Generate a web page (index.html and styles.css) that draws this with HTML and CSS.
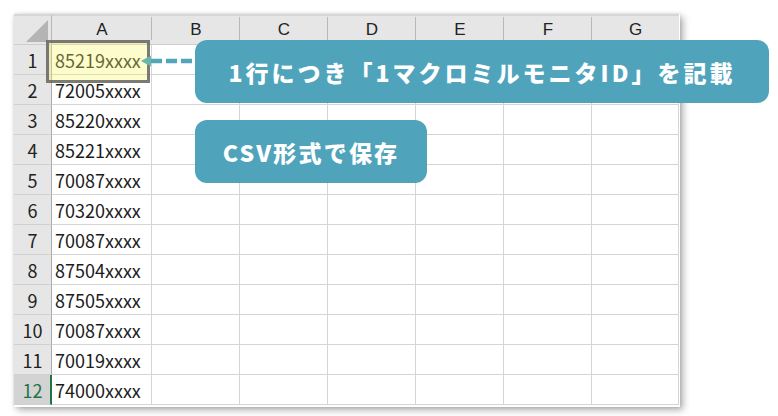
FILE: index.html
```html
<!DOCTYPE html>
<html lang="ja">
<head>
<meta charset="utf-8">
<link rel="stylesheet" href="styles.css">
</head>
<body>
<div class="page">
  <div class="sheet">
    <div class="grid">
      <div class="corner"><span class="tri"></span></div>
      <div class="ch">A</div><div class="ch">B</div><div class="ch">C</div><div class="ch">D</div><div class="ch">E</div><div class="ch">F</div><div class="ch last">G</div>

      <div class="rh">1</div><div class="cell">85219xxxx</div><div class="cell"></div><div class="cell"></div><div class="cell"></div><div class="cell"></div><div class="cell"></div><div class="cell"></div>
      <div class="rh">2</div><div class="cell">72005xxxx</div><div class="cell"></div><div class="cell"></div><div class="cell"></div><div class="cell"></div><div class="cell"></div><div class="cell"></div>
      <div class="rh">3</div><div class="cell">85220xxxx</div><div class="cell"></div><div class="cell"></div><div class="cell"></div><div class="cell"></div><div class="cell"></div><div class="cell"></div>
      <div class="rh">4</div><div class="cell">85221xxxx</div><div class="cell"></div><div class="cell"></div><div class="cell"></div><div class="cell"></div><div class="cell"></div><div class="cell"></div>
      <div class="rh">5</div><div class="cell">70087xxxx</div><div class="cell"></div><div class="cell"></div><div class="cell"></div><div class="cell"></div><div class="cell"></div><div class="cell"></div>
      <div class="rh">6</div><div class="cell">70320xxxx</div><div class="cell"></div><div class="cell"></div><div class="cell"></div><div class="cell"></div><div class="cell"></div><div class="cell"></div>
      <div class="rh">7</div><div class="cell">70087xxxx</div><div class="cell"></div><div class="cell"></div><div class="cell"></div><div class="cell"></div><div class="cell"></div><div class="cell"></div>
      <div class="rh">8</div><div class="cell">87504xxxx</div><div class="cell"></div><div class="cell"></div><div class="cell"></div><div class="cell"></div><div class="cell"></div><div class="cell"></div>
      <div class="rh">9</div><div class="cell">87505xxxx</div><div class="cell"></div><div class="cell"></div><div class="cell"></div><div class="cell"></div><div class="cell"></div><div class="cell"></div>
      <div class="rh">10</div><div class="cell">70087xxxx</div><div class="cell"></div><div class="cell"></div><div class="cell"></div><div class="cell"></div><div class="cell"></div><div class="cell"></div>
      <div class="rh">11</div><div class="cell">70019xxxx</div><div class="cell"></div><div class="cell"></div><div class="cell"></div><div class="cell"></div><div class="cell"></div><div class="cell"></div>
      <div class="rh active">12</div><div class="cell">74000xxxx</div><div class="cell"></div><div class="cell"></div><div class="cell"></div><div class="cell"></div><div class="cell"></div><div class="cell"></div>
    </div>
  </div>

  <div class="sel"></div>
  <svg class="arrow" width="56" height="14" viewBox="0 0 56 14">
    <line x1="10" y1="7" x2="56" y2="7" stroke="#52a6ba" stroke-width="4.5" stroke-dasharray="11 4"/>
    <polygon points="0,7 10,1.5 10,12.5" fill="#6ab4a8"/>
  </svg>
  <div class="callout c1">1行につき「1マクロミルモニタID」を記載</div>
  <div class="callout c2">CSV形式で保存</div>
</div>
</body>
</html>
```
FILE: styles.css
```css
* { box-sizing: border-box; }
html, body { margin: 0; padding: 0; background: #ffffff; }
.page {
  position: relative;
  width: 778px;
  height: 416px;
  padding: 14px;
  font-family: "Noto Sans CJK JP", "Noto Sans", sans-serif;
}
.sheet {
  width: 666px;
  background: #ffffff;
  padding: 0 1px 2px 0;
  box-shadow: 3px 3px 7px rgba(0,0,0,0.32), 0 0 3px rgba(0,0,0,0.12);
}
.grid {
  display: grid;
  grid-template-columns: 38px 100px repeat(5, 88px) 87px;
  grid-template-rows: 31px;
  grid-auto-rows: 30px;
}
.corner {
  position: relative;
  background: #e6e6e6;
  border-right: 1px solid #b9b9b9;
  border-bottom: 1px solid #cdcdcd;
  border-top: 2px solid #d6d6d6;
}
.tri {
  position: absolute;
  right: 3px;
  bottom: 2px;
  width: 0;
  height: 0;
  border-style: solid;
  border-width: 0 0 22px 22px;
  border-color: transparent transparent #b4b4b4 transparent;
}
.ch {
  position: relative;
  background: #e6e6e6;
  border-top: 2px solid #d6d6d6;
  border-bottom: 1px solid #cdcdcd;
  display: flex;
  align-items: center;
  justify-content: center;
  font-size: 17px;
  color: #222222;
  font-family: "Liberation Sans", sans-serif;
  padding-bottom: 1px;
}
.ch::after {
  content: "";
  position: absolute;
  right: 0;
  top: 1px;
  bottom: 4px;
  width: 1px;
  background: #b8b8b8;
}
.ch.last::after { display: none; }
.rh {
  background: #e6e6e6;
  border-right: 1px solid #ababab;
  border-bottom: 1px solid #d0d0d0;
  display: flex;
  align-items: center;
  justify-content: center;
  font-size: 18px;
  color: #222222;
  padding-top: 1px;
}
.rh.active {
  background: #d3d3d3;
  color: #217346;
  border-right: 2px solid #217346;
  padding-left: 1px;
}
.cell {
  border-right: 1px solid #d4d4d4;
  border-bottom: 1px solid #d4d4d4;
  display: flex;
  align-items: center;
  padding: 1px 0 0 3px;
  font-size: 18px;
  color: #1c1c1c;
  white-space: nowrap;
}
.sel {
  position: absolute;
  left: 46px;
  top: 40px;
  width: 104px;
  height: 43px;
  border: 3px solid rgba(100,100,100,0.85);
  background: rgba(250,245,100,0.33);
}
.arrow {
  position: absolute;
  left: 141px;
  top: 54px;
}
.callout {
  position: absolute;
  left: 195px;
  height: 63px;
  background: #4fa4bc;
  border-radius: 12px;
  color: #ffffff;
  font-weight: 800;
  font-size: 23px;
  letter-spacing: 3px;
  display: flex;
  align-items: center;
  justify-content: center;
  white-space: nowrap;
}
.c1 { top: 40px; width: 574px; }
.c2 { top: 120px; width: 232px; letter-spacing: 2.2px; }
```
